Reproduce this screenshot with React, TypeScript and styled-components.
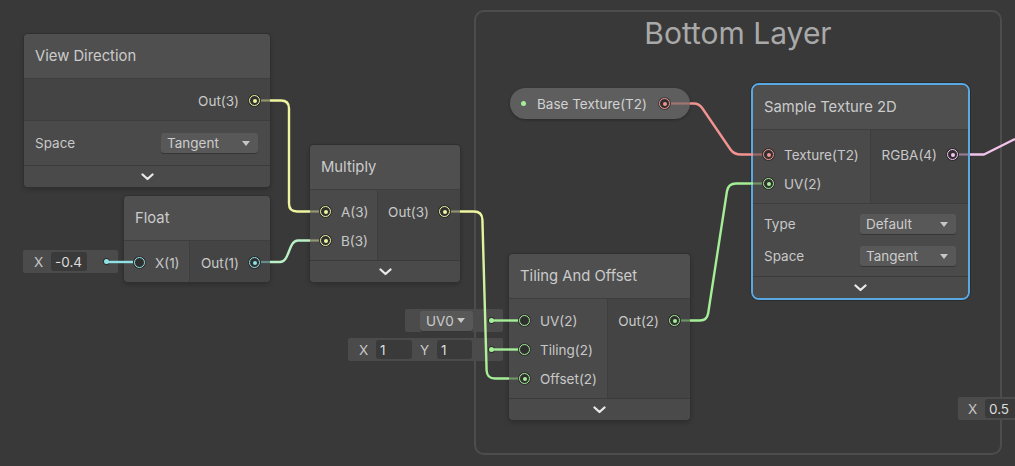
import React from "react";
import styled, { createGlobalStyle, css } from "styled-components";

const COLORS = {
  v1: "#8fe1e4",
  v2: "#a4ee97",
  v3: "#eef59f",
  v1to3: "#b9f0c6",
  tex: "#f29391",
  v4: "#f3c3ee",
};

const GlobalStyle = createGlobalStyle`
  html, body {
    margin: 0;
    padding: 0;
    background: #393939;
  }
  body {
    font-family: Inter, "Noto Sans", sans-serif;
  }
`;

const Canvas = styled.div`
  position: relative;
  width: 1015px;
  height: 466px;
  overflow: hidden;
  background: #393939;
`;

const Group = styled.div`
  position: absolute;
  left: 474px;
  top: 10px;
  width: 528px;
  height: 445px;
  box-sizing: border-box;
  border: 2px solid #4d4d4d;
  border-radius: 10px;
  display: flex;
  justify-content: center;
`;

const GroupTitle = styled.div`
  font-size: 30px;
  line-height: 36px;
  color: #a9a9a9;
  margin-top: 3px;
`;

const Node = styled.div<{ $x: number; $y: number; $w: number; $selected?: boolean }>`
  position: absolute;
  left: ${(p) => p.$x}px;
  top: ${(p) => p.$y}px;
  width: ${(p) => p.$w}px;
  box-sizing: border-box;
  background: #444444;
  border-radius: 4px;
  overflow: hidden;
  box-shadow: 0 0 0 1px #303030, 0 2px 5px rgba(0, 0, 0, 0.25);
  ${(p) =>
    p.$selected &&
    css`
      border: 2px solid #5aa8e2;
      border-radius: 8px;
      box-shadow: 0 0 0 1px #2c2c2c;
    `}
`;

const NodeHeader = styled.div`
  height: 44px;
  display: flex;
  align-items: center;
  padding-left: 11px;
  background: #4f4f4f;
  color: #cbcbcb;
  font-size: 14.8px;
  border-bottom: 1px solid #3e3e3e;
`;

const Ports = styled.div`
  display: flex;
`;

const InputCol = styled.div<{ $w: number; $top?: number }>`
  width: ${(p) => p.$w}px;
  box-sizing: border-box;
  background: #4a4a4a;
  padding: ${(p) => p.$top ?? 7}px 0 5px;
  display: flex;
  flex-direction: column;
  border-right: 1px solid #3e3e3e;
`;

const OutputCol = styled.div<{ $top?: number }>`
  flex: 1;
  background: #444444;
  padding: ${(p) => p.$top ?? 7}px 0 5px;
  display: flex;
  flex-direction: column;
  align-items: flex-end;
`;

const PortRow = styled.div<{ $out?: boolean }>`
  height: 29px;
  display: flex;
  align-items: center;
  gap: 10px;
  padding: 0 10px;
  flex-direction: ${(p) => (p.$out ? "row-reverse" : "row")};
  font-size: 13.5px;
  color: #c8c8c8;
  white-space: nowrap;
`;

const PortRing = styled.span<{ $c: string; $filled?: boolean }>`
  width: 11px;
  height: 11px;
  box-sizing: border-box;
  border-radius: 50%;
  border: 1.8px solid ${(p) => p.$c};
  background: #2f2f2f;
  display: flex;
  align-items: center;
  justify-content: center;
  flex-shrink: 0;
  box-shadow: 0 0 0 1px rgba(0, 0, 0, 0.35);
  &::after {
    content: "";
    width: 4px;
    height: 4px;
    border-radius: 50%;
    background: ${(p) => p.$c};
    display: ${(p) => (p.$filled ? "block" : "none")};
  }
`;

const Props = styled.div<{ $pad?: number }>`
  background: #4a4a4a;
  padding: ${(p) => p.$pad ?? 8}px 12px ${(p) => p.$pad ?? 8}px 11px;
  border-top: 1px solid #3e3e3e;
  display: flex;
  flex-direction: column;
  gap: 4px;
`;

const PropRow = styled.div`
  height: 28px;
  display: flex;
  align-items: center;
  justify-content: space-between;
  font-size: 13.5px;
  color: #c8c8c8;
`;

const Dropdown = styled.div<{ $w: number }>`
  width: ${(p) => p.$w}px;
  height: 20px;
  box-sizing: border-box;
  background: #585858;
  border-radius: 3px;
  display: flex;
  align-items: center;
  justify-content: space-between;
  padding: 0 8px 0 6px;
  font-size: 13.5px;
  color: #cccccc;
  box-shadow: 0 1px 0 #353535;
`;

const Caret = styled.span`
  width: 0;
  height: 0;
  border-left: 4.5px solid transparent;
  border-right: 4.5px solid transparent;
  border-top: 5px solid #c6c6c6;
`;

const Collapse = styled.div`
  height: 21px;
  background: #4a4a4a;
  border-top: 1px solid #3b3b3b;
  display: flex;
  align-items: center;
  justify-content: center;
`;

const InlineField = styled.div<{ $x: number; $y: number; $w: number; $pl: number }>`
  position: absolute;
  left: ${(p) => p.$x}px;
  top: ${(p) => p.$y}px;
  width: ${(p) => p.$w}px;
  height: 23px;
  box-sizing: border-box;
  padding-left: ${(p) => p.$pl}px;
  background: #4b4b4b;
  border-radius: 2px;
  display: flex;
  align-items: center;
  gap: 8px;
  font-size: 13.5px;
  color: #c8c8c8;
`;

const FieldLabel = styled.span`
  width: 9px;
  text-align: center;
`;

const NumberBox = styled.div<{ $w: number }>`
  width: ${(p) => p.$w}px;
  height: 19px;
  box-sizing: border-box;
  background: #3a3a3a;
  border-radius: 3px;
  padding-left: 4px;
  display: flex;
  align-items: center;
  color: #dcdcdc;
  flex-shrink: 0;
`;

const FieldDot = styled.span<{ $c: string }>`
  width: 5px;
  height: 5px;
  border-radius: 50%;
  background: ${(p) => p.$c};
  margin-left: auto;
  margin-right: 9.5px;
  box-shadow: 0 0 0 1px rgba(0, 0, 0, 0.4);
`;

const PropertyPill = styled.div`
  position: absolute;
  left: 510px;
  top: 88px;
  width: 180px;
  height: 31px;
  box-sizing: border-box;
  border-radius: 16px;
  background: #5e5e5e;
  display: flex;
  align-items: center;
  padding: 0 20px 0 11px;
  gap: 11px;
  font-size: 13.5px;
  color: #d2d2d2;
  box-shadow: 0 1px 3px rgba(0, 0, 0, 0.3);
`;

const PillDot = styled.span`
  width: 5px;
  height: 5px;
  border-radius: 50%;
  background: ${COLORS.v2};
`;

const PillLabel = styled.span`
  flex: 1;
  white-space: nowrap;
`;

const Wires = styled.svg`
  position: absolute;
  left: 0;
  top: 0;
  pointer-events: none;
`;

const Chevron = () => (
  <svg width="13" height="8" viewBox="0 0 13 8">
    <path d="M1.5 1.5 L6.5 6 L11.5 1.5" fill="none" stroke="#e9e9e9" strokeWidth="2.3" strokeLinecap="round" strokeLinejoin="round" />
  </svg>
);

const wires: { d: string; c: string }[] = [
  { d: "M270,100.5 H281 Q289,100.5 289,108.5 V203.5 Q289,211.5 297,211.5 H310", c: COLORS.v3 },
  { d: "M270,262 H280 C290,262 288,240.5 298,240.5 H310", c: COLORS.v1to3 },
  { d: "M460,211.5 H474 Q482,211.5 482.4,219.5 L486.6,370.5 Q487,378.5 495,378.5 H509", c: "url(#multToOffset)" },
  { d: "M106,262 H133", c: COLORS.v1 },
  { d: "M491,320.5 H518", c: COLORS.v2 },
  { d: "M491,349.5 H518", c: COLORS.v2 },
  { d: "M690,320.5 H700 Q707,320.5 708.2,313 L727,191 Q728.3,183.5 736,183.5 H753", c: COLORS.v2 },
  { d: "M690,103.5 H694 Q699,103.5 702,107.8 L730.5,149.5 Q734,154.5 741,154.5 H753", c: COLORS.tex },
  { d: "M970,154.5 H984 L1015,139", c: COLORS.v4 },
];

const stubs: { x1: number; x2: number; y: number; c: string }[] = [
  { x1: 261, x2: 270, y: 100.5, c: COLORS.v3 },
  { x1: 261, x2: 270, y: 262, c: COLORS.v1 },
  { x1: 310, x2: 319, y: 211.5, c: COLORS.v3 },
  { x1: 310, x2: 319, y: 240.5, c: COLORS.v3 },
  { x1: 451, x2: 460, y: 211.5, c: COLORS.v3 },
  { x1: 509, x2: 518, y: 378.5, c: COLORS.v2 },
  { x1: 681, x2: 690, y: 320.5, c: COLORS.v2 },
  { x1: 753, x2: 762, y: 154.5, c: COLORS.tex },
  { x1: 753, x2: 762, y: 183.5, c: COLORS.v2 },
  { x1: 959, x2: 968, y: 154.5, c: COLORS.v4 },
  { x1: 671, x2: 690, y: 103.5, c: COLORS.tex },
];

export default function App() {
  return (
    <>
      <GlobalStyle />
      <Canvas>
        <Group>
          <GroupTitle>Bottom Layer</GroupTitle>
        </Group>

        <Node $x={24} $y={34} $w={246}>
          <NodeHeader>View Direction</NodeHeader>
          <Ports>
            <OutputCol>
              <PortRow $out>
                <PortRing $c={COLORS.v3} $filled />
                Out(3)
              </PortRow>
            </OutputCol>
          </Ports>
          <Props>
            <PropRow>
              Space
              <Dropdown $w={97}>
                Tangent
                <Caret />
              </Dropdown>
            </PropRow>
          </Props>
          <Collapse>
            <Chevron />
          </Collapse>
        </Node>

        <Node $x={124} $y={196} $w={146}>
          <NodeHeader>Float</NodeHeader>
          <Ports>
            <InputCol $w={66}>
              <PortRow>
                <PortRing $c={COLORS.v1} />
                X(1)
              </PortRow>
            </InputCol>
            <OutputCol>
              <PortRow $out>
                <PortRing $c={COLORS.v1} $filled />
                Out(1)
              </PortRow>
            </OutputCol>
          </Ports>
        </Node>

        <Node $x={310} $y={145} $w={150}>
          <NodeHeader>Multiply</NodeHeader>
          <Ports>
            <InputCol $w={68}>
              <PortRow>
                <PortRing $c={COLORS.v3} $filled />
                A(3)
              </PortRow>
              <PortRow>
                <PortRing $c={COLORS.v3} $filled />
                B(3)
              </PortRow>
            </InputCol>
            <OutputCol>
              <PortRow $out>
                <PortRing $c={COLORS.v3} $filled />
                Out(3)
              </PortRow>
            </OutputCol>
          </Ports>
          <Collapse>
            <Chevron />
          </Collapse>
        </Node>

        <Node $x={509} $y={254} $w={181}>
          <NodeHeader>Tiling And Offset</NodeHeader>
          <Ports>
            <InputCol $w={99}>
              <PortRow>
                <PortRing $c={COLORS.v2} />
                UV(2)
              </PortRow>
              <PortRow>
                <PortRing $c={COLORS.v2} />
                Tiling(2)
              </PortRow>
              <PortRow>
                <PortRing $c={COLORS.v2} $filled />
                Offset(2)
              </PortRow>
            </InputCol>
            <OutputCol>
              <PortRow $out>
                <PortRing $c={COLORS.v2} $filled />
                Out(2)
              </PortRow>
            </OutputCol>
          </Ports>
          <Collapse>
            <Chevron />
          </Collapse>
        </Node>

        <PropertyPill>
          <PillDot />
          <PillLabel>Base Texture(T2)</PillLabel>
          <PortRing $c={COLORS.tex} $filled />
        </PropertyPill>

        <Node $x={751} $y={83} $w={219} $selected>
          <NodeHeader>Sample Texture 2D</NodeHeader>
          <Ports>
            <InputCol $w={118} $top={10}>
              <PortRow>
                <PortRing $c={COLORS.tex} $filled />
                Texture(T2)
              </PortRow>
              <PortRow>
                <PortRing $c={COLORS.v2} $filled />
                UV(2)
              </PortRow>
            </InputCol>
            <OutputCol $top={10}>
              <PortRow $out>
                <PortRing $c={COLORS.v4} $filled />
                RGBA(4)
              </PortRow>
            </OutputCol>
          </Ports>
          <Props $pad={6}>
            <PropRow>
              Type
              <Dropdown $w={96}>
                Default
                <Caret />
              </Dropdown>
            </PropRow>
            <PropRow>
              Space
              <Dropdown $w={96}>
                Tangent
                <Caret />
              </Dropdown>
            </PropRow>
          </Props>
          <Collapse>
            <Chevron />
          </Collapse>
        </Node>

        <InlineField $x={23} $y={250} $w={95} $pl={11}>
          <FieldLabel>X</FieldLabel>
          <NumberBox $w={36}>-0.4</NumberBox>
          <FieldDot $c={COLORS.v1} />
        </InlineField>

        <InlineField $x={405} $y={309} $w={98} $pl={15}>
          <Dropdown $w={53}>
            UV0
            <Caret />
          </Dropdown>
          <FieldDot $c={COLORS.v2} />
        </InlineField>

        <InlineField $x={348} $y={338} $w={155} $pl={11}>
          <FieldLabel>X</FieldLabel>
          <NumberBox $w={36}>1</NumberBox>
          <FieldLabel>Y</FieldLabel>
          <NumberBox $w={35}>1</NumberBox>
          <FieldDot $c={COLORS.v2} />
        </InlineField>

        <InlineField $x={958} $y={397} $w={70} $pl={10}>
          <FieldLabel>X</FieldLabel>
          <NumberBox $w={40}>0.5</NumberBox>
        </InlineField>

        <Wires width="1015" height="466" viewBox="0 0 1015 466">
          <defs>
            <linearGradient id="multToOffset" gradientUnits="userSpaceOnUse" x1="0" y1="211" x2="0" y2="379">
              <stop offset="0" stopColor={COLORS.v3} />
              <stop offset="1" stopColor={COLORS.v2} />
            </linearGradient>
          </defs>
          {stubs.map((s, i) => (
            <line key={i} x1={s.x1} x2={s.x2} y1={s.y} y2={s.y} stroke={s.c} strokeOpacity={0.45} strokeWidth={2.2} />
          ))}
          {wires.map((w, i) => (
            <path key={i} d={w.d} fill="none" stroke={w.c} strokeWidth={2.4} strokeLinejoin="round" />
          ))}
        </Wires>
      </Canvas>
    </>
  );
}
